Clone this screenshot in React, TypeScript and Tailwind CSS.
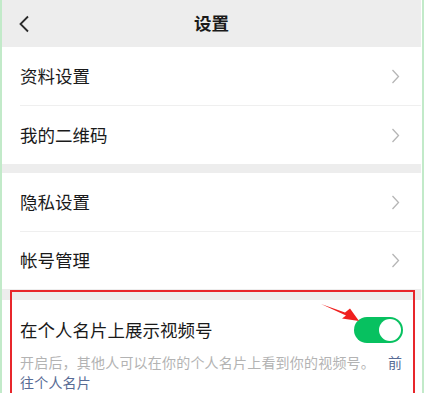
const Chevron = () => (
  <svg width="9" height="15" viewBox="0 0 9 15" fill="none">
    <polyline points="1.5,1 7.5,7.5 1.5,14" stroke="#b6b6b6" strokeWidth="1.3" />
  </svg>
);

const Row = ({ label }: { label: string }) => (
  <div className="h-[58px] bg-white flex items-center justify-between pl-[18px] pr-[21px]">
    <span className="text-[17.5px] text-[#1a1a1a]">{label}</span>
    <Chevron />
  </div>
);

const Divider = () => (
  <div className="h-px bg-white pl-[18px]">
    <div className="h-px bg-[#efefef]" />
  </div>
);

export default function App() {
  return (
    <div
      className="w-[424px] h-[393px] overflow-hidden bg-[#c2eac9] relative"
      style={{ fontFamily: '"Noto Sans CJK SC", "Noto Sans", sans-serif' }}
    >
      <div className="ml-[2px] w-[420px] h-full bg-[#ededed] border-r border-white">
        {/* 标题栏 */}
        <div className="h-[47px] grid grid-cols-[1fr_auto_1fr] items-center">
          <div className="pl-[16px]">
            <svg width="12" height="18" viewBox="0 0 12 18" fill="none">
              <polyline points="10,1.5 2.5,9 10,16.5" stroke="#2a2a2a" strokeWidth="1.8" />
            </svg>
          </div>
          <h1 className="text-[17.5px] font-bold text-[#1a1a1a]">设置</h1>
          <div />
        </div>

        <Row label="资料设置" />
        <Divider />
        <Row label="我的二维码" />

        <div className="h-[9px]" />

        <Row label="隐私设置" />
        <Divider />
        <div className="h-[57px] bg-white flex items-center justify-between pl-[18px] pr-[21px]">
          <span className="text-[17.5px] text-[#1a1a1a]">帐号管理</span>
          <Chevron />
        </div>

        <div className="h-[11px]" />

        {/* 视频号 */}
        <div className="bg-white pl-[18px] pr-[18px] pt-[17px] pb-4">
          <div className="flex items-center justify-between h-[26px]">
            <span className="text-[17.5px] text-[#1a1a1a]">在个人名片上展示视频号</span>
            <div className="w-[49px] h-[26px] rounded-full bg-[#07c160] flex items-center justify-end pr-[2px]">
              <div className="w-[22px] h-[22px] rounded-full bg-white" />
            </div>
          </div>
          <p className="mt-[9px] text-[14px] leading-[20px] tracking-[0.2px] text-[#b3b3b3]">
            开启后，其他人可以在你的个人名片上看到你的视频号。
            <span className="pl-[13px] text-[#576b95]">前往个人名片</span>
          </p>
        </div>
      </div>

      {/* 标注 */}
      <div className="absolute left-[10px] top-[290px] w-[405px] h-[120px] border-2 border-[#e8262b]" />
      <svg className="absolute left-0 top-0" width="424" height="393" viewBox="0 0 424 393">
        <polygon
          points="321,304 345,312.5 350,308.5 359,321 342,318.5 346,315.5"
          fill="#f0201f"
        />
      </svg>
    </div>
  );
}
